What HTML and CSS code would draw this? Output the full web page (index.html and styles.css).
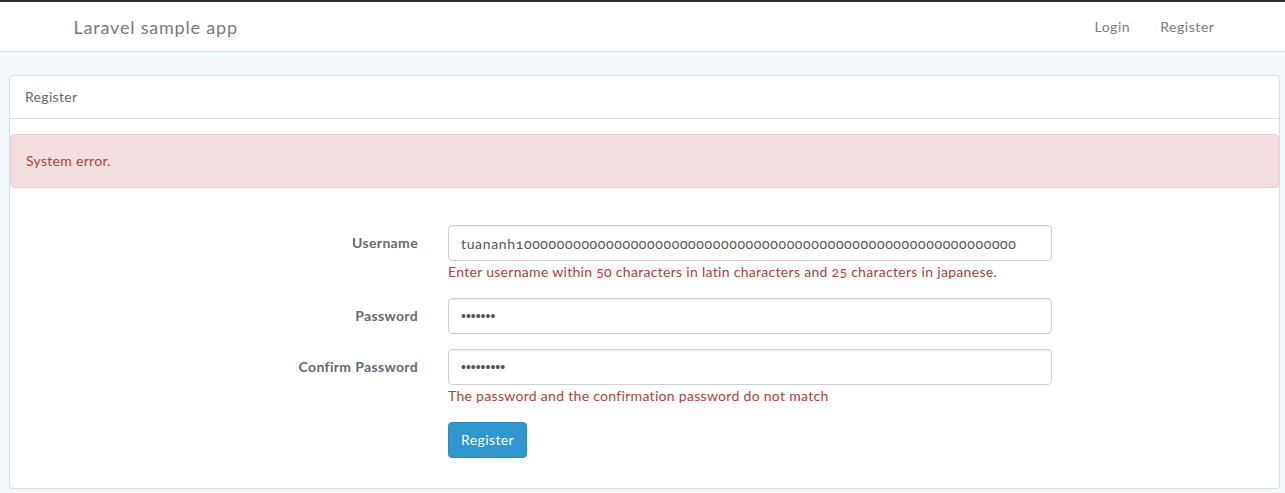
FILE: index.html
```html
<!DOCTYPE html>
<html lang="en">
<head>
<meta charset="utf-8">
<title>Laravel sample app</title>
<link rel="stylesheet" href="styles.css">
</head>
<body>
<div class="topline"></div>
<nav class="navbar">
  <div class="container">
    <a class="brand" href="#">Laravel sample app</a>
    <ul class="nav-right">
      <li><a href="#">Login</a></li>
      <li><a href="#">Register</a></li>
    </ul>
  </div>
</nav>
<main class="page">
  <div class="panel">
    <div class="panel-heading">Register</div>
    <div class="panel-body">
      <div class="alert">System error.</div>
      <form class="form">
        <div class="form-group">
          <label class="form-label" for="username">Username</label>
          <div class="form-field">
            <input class="form-control" id="username" type="text" value="tuananh1000000000000000000000000000000000000000000000000000000000000">
            <span class="help">Enter username within 50 characters in latin characters and 25 characters in japanese.</span>
          </div>
        </div>
        <div class="form-group">
          <label class="form-label" for="password">Password</label>
          <div class="form-field">
            <input class="form-control secret" id="password" type="password" value="1234567">
          </div>
        </div>
        <div class="form-group">
          <label class="form-label" for="confirm">Confirm Password</label>
          <div class="form-field">
            <input class="form-control secret" id="confirm" type="password" value="123456789">
            <span class="help">The password and the confirmation password do not match</span>
          </div>
        </div>
        <div class="form-group">
          <div class="form-label"></div>
          <div class="form-field">
            <button class="btn-primary" type="button">Register</button>
          </div>
        </div>
      </form>
    </div>
  </div>
</main>
</body>
</html>
```
FILE: styles.css
```css
* { box-sizing: border-box; }
html, body { margin: 0; padding: 0; }
body {
  background: #f5f8fa;
  font-family: "Lato", "Open Sans", "Liberation Sans", sans-serif;
  font-size: 14px;
  line-height: 22px;
  color: #636b6f;
  letter-spacing: 0.3px;
  font-variant-numeric: oldstyle-nums;
}
a { text-decoration: none; }
.topline { height: 2px; background: #2e2e2e; }
.navbar {
  height: 50px;
  background: #fff;
  border-bottom: 1px solid #d3e0e9;
}
.container {
  width: 1170px;
  margin: 0 auto;
  padding: 0 13px 0 16px;
  height: 100%;
  display: flex;
  align-items: center;
  justify-content: space-between;
}
.brand { font-size: 18px; color: #737a85; letter-spacing: 0.8px; }
.nav-right {
  list-style: none;
  margin: 0;
  padding: 0;
  display: flex;
  gap: 30px;
}
.nav-right a { color: #777c85; letter-spacing: 0.55px; }
.page { padding: 23px 5px 0 9px; }
.panel {
  background: #fff;
  border: 1px solid #d3e0e9;
  border-radius: 4px;
  box-shadow: 0 1px 1px rgba(0,0,0,.05);
}
.panel-heading {
  padding: 10px 15px;
  border-bottom: 1px solid #d3e0e9;
  border-radius: 3px 3px 0 0;
}
.panel-body { padding: 15px; }
.alert {
  margin: 0 -15px;
  padding: 15px;
  border: 1px solid #ebccd1;
  border-radius: 4px;
  background: #f2dede;
  color: #a94442;
}
.form { margin: 37px -15px 0; }
.form-group {
  display: grid;
  grid-template-columns: 33.3333% 50%;
  margin-bottom: 15px;
}
.form-label {
  padding: 7px 15px 0;
  text-align: right;
  font-weight: 700;
  letter-spacing: 0.35px;
  color: #636b6f;
}
.form-field { padding: 0 15px; }
.form-control {
  display: block;
  width: 100%;
  height: 36px;
  padding: 6px 12px;
  font: inherit;
  font-variant-numeric: oldstyle-nums;
  letter-spacing: 0.65px;
  line-height: 22px;
  color: #555;
  background: #fff;
  border: 1px solid #ccd0d2;
  border-radius: 4px;
  box-shadow: inset 0 1px 1px rgba(0,0,0,.075);
}
.secret {
  font-family: "Liberation Sans", sans-serif;
  letter-spacing: 0;
}
.help { display: block; color: #a94442; }
.btn-primary {
  height: 36px;
  padding: 6px 12px;
  font: inherit;
  line-height: 22px;
  letter-spacing: 0.4px;
  color: #fff;
  background: #3097d1;
  border: 1px solid #2a88bd;
  border-radius: 4px;
}
```
